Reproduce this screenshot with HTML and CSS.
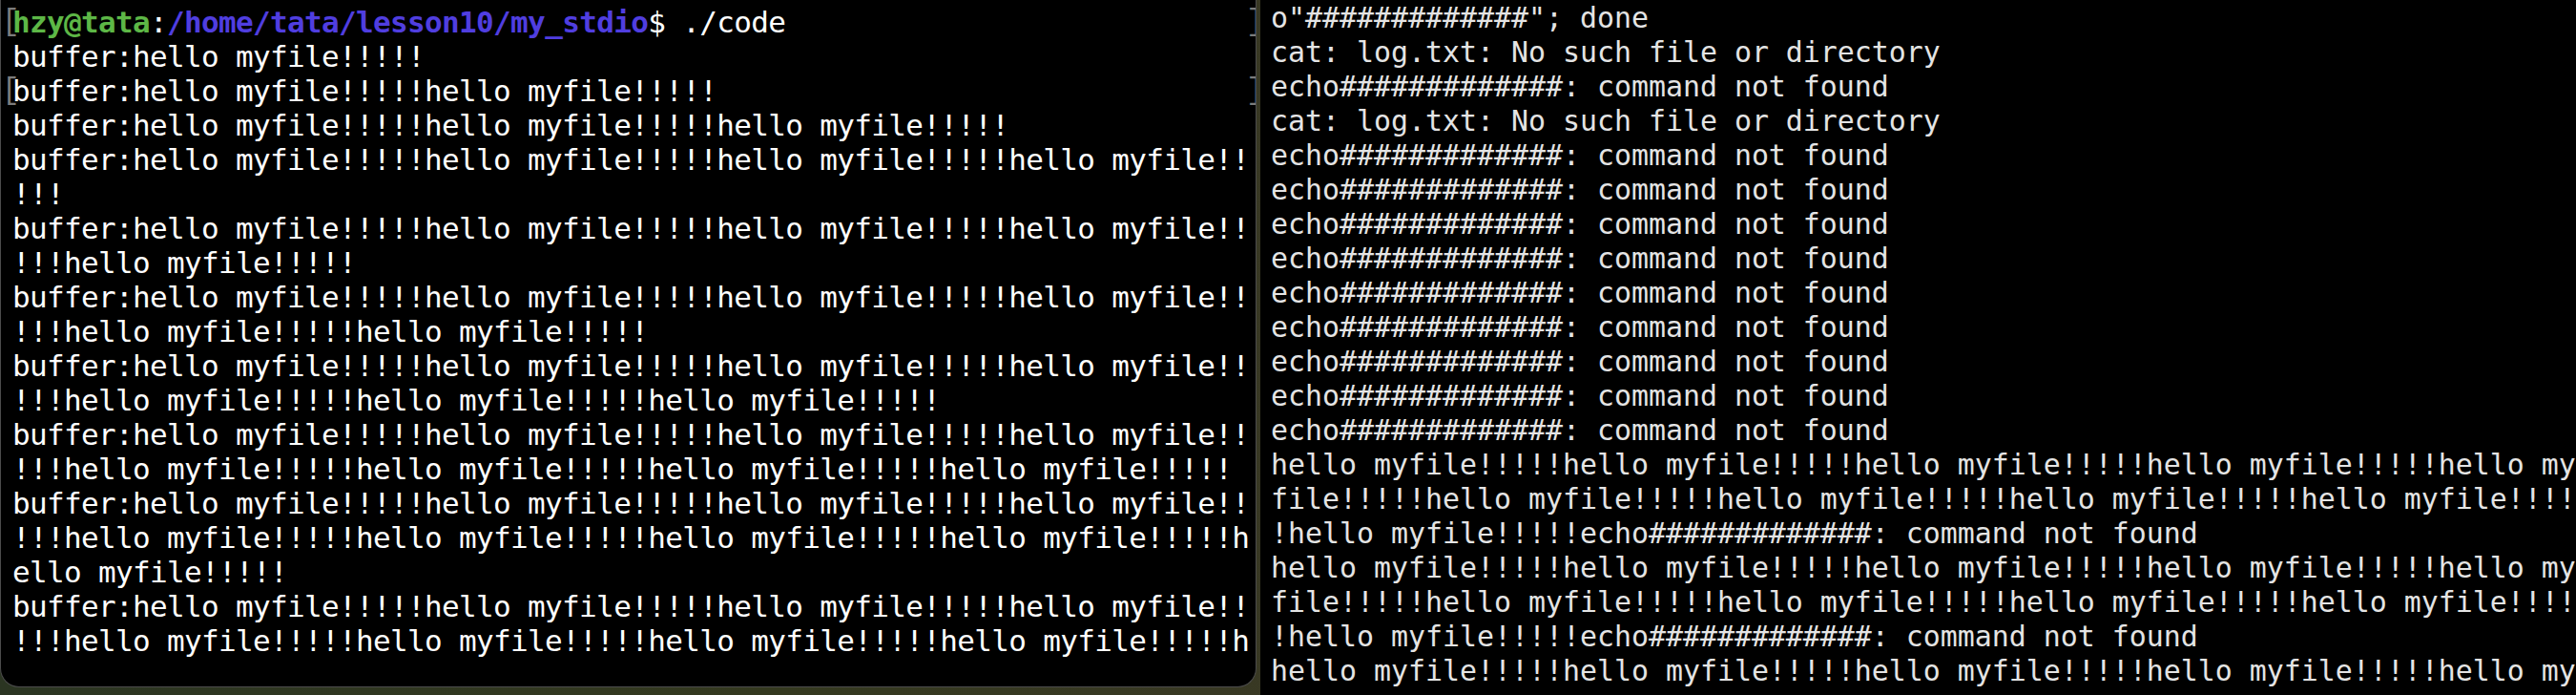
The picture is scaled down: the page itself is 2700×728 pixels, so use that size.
FILE: index.html
```html
<!DOCTYPE html>
<html lang="en">
<head>
    <meta charset="UTF-8">
    <meta name="viewport" content="width=device-width, initial-scale=1.0">
    <title>Terminals</title>
    <link rel="stylesheet" href="styles.css">
</head>
<body>
    <div class="desktop">
        <!-- left terminal: running ./code -->
        <div class="term term-left">
            <div class="line marked"><span class="user">hzy@tata</span>:<span class="path">/home/tata/lesson10/my_stdio</span>$ ./code</div>
            <div class="line">buffer:hello myfile!!!!!</div>
            <div class="line marked">buffer:hello myfile!!!!!hello myfile!!!!!</div>
            <div class="line">buffer:hello myfile!!!!!hello myfile!!!!!hello myfile!!!!!</div>
            <div class="line">buffer:hello myfile!!!!!hello myfile!!!!!hello myfile!!!!!hello myfile!!</div>
            <div class="line">!!!</div>
            <div class="line">buffer:hello myfile!!!!!hello myfile!!!!!hello myfile!!!!!hello myfile!!</div>
            <div class="line">!!!hello myfile!!!!!</div>
            <div class="line">buffer:hello myfile!!!!!hello myfile!!!!!hello myfile!!!!!hello myfile!!</div>
            <div class="line">!!!hello myfile!!!!!hello myfile!!!!!</div>
            <div class="line">buffer:hello myfile!!!!!hello myfile!!!!!hello myfile!!!!!hello myfile!!</div>
            <div class="line">!!!hello myfile!!!!!hello myfile!!!!!hello myfile!!!!!</div>
            <div class="line">buffer:hello myfile!!!!!hello myfile!!!!!hello myfile!!!!!hello myfile!!</div>
            <div class="line">!!!hello myfile!!!!!hello myfile!!!!!hello myfile!!!!!hello myfile!!!!!</div>
            <div class="line">buffer:hello myfile!!!!!hello myfile!!!!!hello myfile!!!!!hello myfile!!</div>
            <div class="line">!!!hello myfile!!!!!hello myfile!!!!!hello myfile!!!!!hello myfile!!!!!h</div>
            <div class="line">ello myfile!!!!!</div>
            <div class="line">buffer:hello myfile!!!!!hello myfile!!!!!hello myfile!!!!!hello myfile!!</div>
            <div class="line">!!!hello myfile!!!!!hello myfile!!!!!hello myfile!!!!!hello myfile!!!!!h</div>
        </div>

        <!-- right terminal: log loop output -->
        <div class="term term-right">
            <div class="line">o"#############"; done</div>
            <div class="line">cat: log.txt: No such file or directory</div>
            <div class="line">echo#############: command not found</div>
            <div class="line">cat: log.txt: No such file or directory</div>
            <div class="line">echo#############: command not found</div>
            <div class="line">echo#############: command not found</div>
            <div class="line">echo#############: command not found</div>
            <div class="line">echo#############: command not found</div>
            <div class="line">echo#############: command not found</div>
            <div class="line">echo#############: command not found</div>
            <div class="line">echo#############: command not found</div>
            <div class="line">echo#############: command not found</div>
            <div class="line">echo#############: command not found</div>
            <div class="line">hello myfile!!!!!hello myfile!!!!!hello myfile!!!!!hello myfile!!!!!hello my</div>
            <div class="line">file!!!!!hello myfile!!!!!hello myfile!!!!!hello myfile!!!!!hello myfile!!!!</div>
            <div class="line">!hello myfile!!!!!echo#############: command not found</div>
            <div class="line">hello myfile!!!!!hello myfile!!!!!hello myfile!!!!!hello myfile!!!!!hello my</div>
            <div class="line">file!!!!!hello myfile!!!!!hello myfile!!!!!hello myfile!!!!!hello myfile!!!!</div>
            <div class="line">!hello myfile!!!!!echo#############: command not found</div>
            <div class="line">hello myfile!!!!!hello myfile!!!!!hello myfile!!!!!hello myfile!!!!!hello my</div>
        </div>
    </div>
</body>
</html>
```

FILE: styles.css
```css
body {
    margin: 0;
    padding: 0;
    width: 2700px;
    height: 728px;
    overflow: hidden;
    background-color: #2f3524;
}

/* Desktop wallpaper behind the windows */
.desktop {
    display: flex;
    height: 728px;
    background: linear-gradient(90deg, #2b3522 0%, #34391f 30%, #3b3826 60%, #4a3a2a 100%);
}

/* Terminal panes */
.term {
    background-color: #000;
    box-sizing: border-box;
    overflow: hidden;
}

.term .line {
    height: 36px;
    line-height: 36px;
    white-space: pre;
}

.term-left {
    width: 1317px;
    height: 720px;
    flex-shrink: 0;
    padding: 5px 0 0 12px;
    border: 1px solid #4c4c4c;
    border-top: none;
    border-radius: 0 0 20px 20px;
    margin-right: 4px;
    color: #fff;
    font-family: "DejaVu Sans Mono", monospace;
    font-size: 31px;
    letter-spacing: -0.66px;
}

.term-left .marked {
    position: relative;
}

.term-left .marked::before,
.term-left .marked::after {
    position: absolute;
    top: 0;
    color: #7c7c7c;
    font-weight: normal;
    font-family: "Liberation Mono", monospace;
}

.term-left .marked::before {
    content: "[";
    left: -11px;
}

.term-left .marked::after {
    content: "]";
    left: 1293px;
}

.term-left .user {
    color: #5db746;
    font-weight: bold;
}

.term-left .path {
    color: #503ee0;
    font-weight: bold;
}

.term-right {
    flex: 1;
    height: 728px;
    padding: 1px 0 0 11px;
    color: #e4e4e4;
    font-family: "DejaVu Sans Mono", monospace;
    font-size: 29.9px;
}
```
